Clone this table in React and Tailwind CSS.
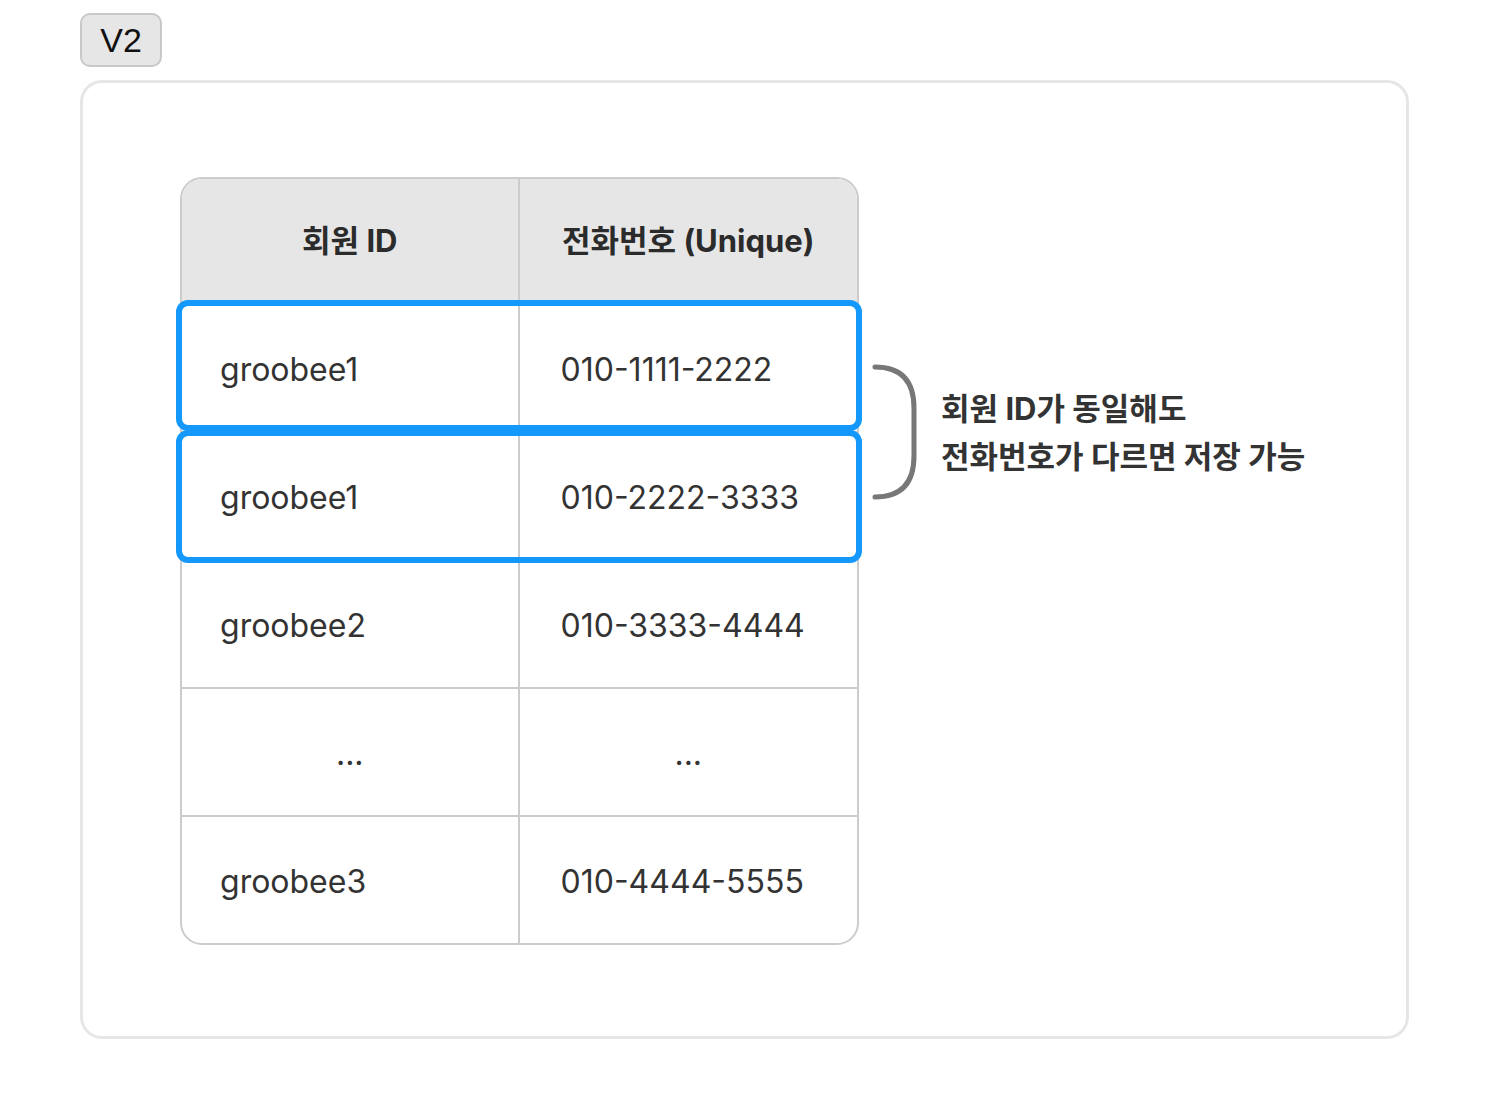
const rows = [
  { id: "groobee1", phone: "010-1111-2222", highlight: true },
  { id: "groobee1", phone: "010-2222-3333", highlight: true },
  { id: "groobee2", phone: "010-3333-4444" },
  { id: "...", phone: "...", dots: true },
  { id: "groobee3", phone: "010-4444-5555" },
]

const font = { fontFamily: "Inter, 'Noto Sans CJK KR', sans-serif" }

function Bracket() {
  return (
    <svg width="52" height="138" viewBox="0 0 52 138" className="shrink-0">
      <path
        d="M4 4 Q43 4 43 45 L43 93 Q43 134 4 134"
        fill="none"
        stroke="#777777"
        strokeWidth="5"
        strokeLinecap="round"
      />
    </svg>
  )
}

export default function App() {
  return (
    <div className="bg-white min-h-[1120px] pl-[80px] pt-[13px]" style={font}>
      <div className="w-[82px] h-[54px] rounded-[10px] border-2 border-[#c8c8c8] bg-[#e6e6e6] flex items-center justify-center">
        <span className="text-[34px] text-[#111] leading-none" style={{ fontFamily: "'Liberation Sans', Arial, sans-serif" }}>
          V2
        </span>
      </div>

      <div className="mt-[13px] w-[1329px] h-[959px] rounded-[22px] border-[3px] border-[#e6e6e6] pl-[97px] pt-[94px]">
        <div className="flex items-start">
          <div className="relative w-[679px]">
            <div className="rounded-[22px] border-2 border-[#cccccc] overflow-hidden">
              <div className="grid grid-cols-2 h-[124px] bg-[#e6e6e6]">
                <div className="flex items-center justify-center border-r-2 border-[#cccccc] text-[31px] font-bold text-[#2b2b2b]">
                  회원 ID
                </div>
                <div className="flex items-center justify-center text-[31px] font-bold text-[#2b2b2b]">
                  전화번호 (Unique)
                </div>
              </div>
              {rows.map((r, i) => (
                <div key={i} className="grid grid-cols-2 h-[128px] border-t-2 border-[#cccccc]">
                  <div
                    className={`flex items-center pt-[3px] border-r-2 border-[#cccccc] text-[32px] text-[#333] ${
                      r.dots ? "justify-center" : "pl-[38px]"
                    }`}
                  >
                    {r.id}
                  </div>
                  <div
                    className={`flex items-center pt-[3px] text-[32px] text-[#333] ${
                      r.dots ? "justify-center" : "pl-[41px]"
                    }`}
                  >
                    {r.phone}
                  </div>
                </div>
              ))}
            </div>
            <div className="absolute left-[-4px] top-[123px] w-[686px] h-[131px] rounded-[12px] border-[6px] border-[#1598fb]" />
            <div className="absolute left-[-4px] top-[253px] w-[686px] h-[133px] rounded-[12px] border-[6px] border-[#1598fb]" />
          </div>

          <div className="mt-[186px] ml-[12px] flex items-center gap-[18px]">
            <Bracket />
            <div className="pt-[2px] text-[31px] font-bold text-[#333] leading-[48px]">
              <div>회원 ID가 동일해도</div>
              <div>전화번호가 다르면 저장 가능</div>
            </div>
          </div>
        </div>
      </div>
    </div>
  )
}
